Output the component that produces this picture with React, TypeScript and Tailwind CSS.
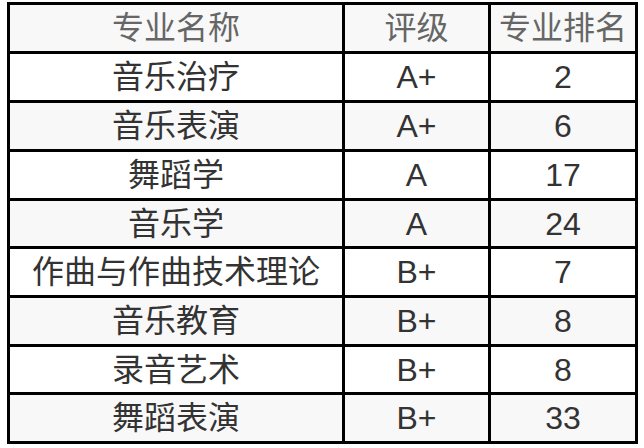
const rows: { name: string; grade: string; rank: string }[] = [
  { name: "音乐治疗", grade: "A+", rank: "2" },
  { name: "音乐表演", grade: "A+", rank: "6" },
  { name: "舞蹈学", grade: "A", rank: "17" },
  { name: "音乐学", grade: "A", rank: "24" },
  { name: "作曲与作曲技术理论", grade: "B+", rank: "7" },
  { name: "音乐教育", grade: "B+", rank: "8" },
  { name: "录音艺术", grade: "B+", rank: "8" },
  { name: "舞蹈表演", grade: "B+", rank: "33" },
];

/** Ranking table: header row plus one row per major, striped grey/white,
 *  heavy black rules drawn by the grid gap over a black backdrop. */
export default function App() {
  const cell = "flex items-center justify-center";
  return (
    <div
      className="w-[644px] h-[448px] bg-white pl-[7px] pt-[2px]"
      style={{ fontFamily: '"Liberation Sans", "Noto Sans CJK SC", sans-serif' }}
    >
      <div className="grid w-[631px] h-[442px] grid-cols-[332px_143px_144px] grid-rows-[46px_46px_46px_46px_45px_46px_46px_45px_46px] gap-[3px] bg-black p-[3px] text-[32px] leading-none">
        <div className={`${cell} bg-[#f8f8f8] text-[#666666]`}>专业名称</div>
        <div className={`${cell} bg-[#f8f8f8] text-[#666666]`}>评级</div>
        <div className={`${cell} bg-[#f8f8f8] text-[#666666]`}>专业排名</div>
        {rows.map((r, i) => {
          const bg = i % 2 === 0 ? "bg-white" : "bg-[#f8f8f8]";
          return [
            <div key={`${i}-n`} className={`${cell} ${bg} text-[#333333]`}>
              {r.name}
            </div>,
            <div key={`${i}-g`} className={`${cell} ${bg} text-[#333333]`}>
              {r.grade}
            </div>,
            <div key={`${i}-r`} className={`${cell} ${bg} text-[#333333]`}>
              {r.rank}
            </div>,
          ];
        })}
      </div>
    </div>
  );
}
